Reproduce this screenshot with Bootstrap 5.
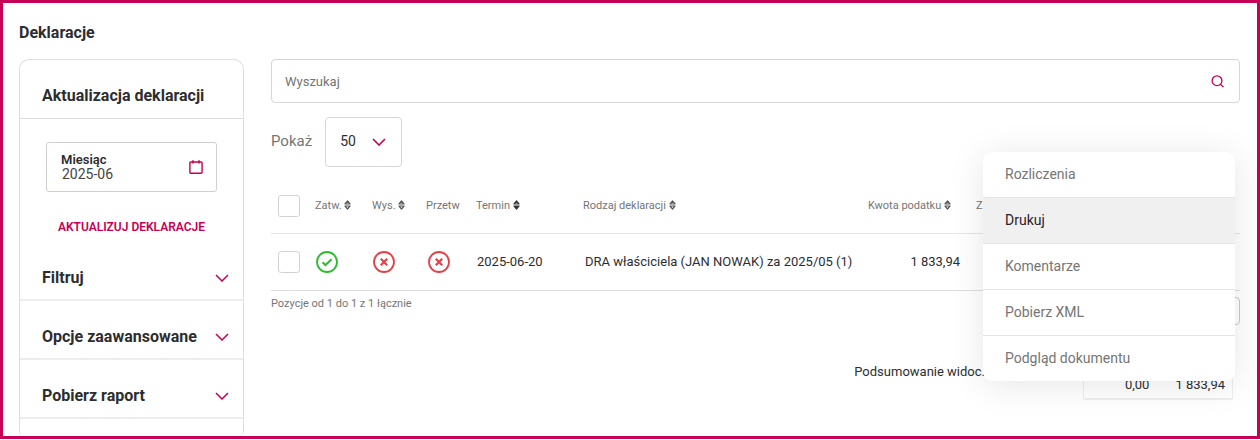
<!DOCTYPE html>
<html lang="pl">
<head>
<meta charset="utf-8">
<meta name="viewport" content="width=device-width, initial-scale=1">
<title>Deklaracje</title>
<link href="https://cdn.jsdelivr.net/npm/bootstrap@5.3.0/dist/css/bootstrap.min.css" rel="stylesheet">
<style>
  :root { --brand: #c60055; --ink: #2d2d2f; --muted: #757575; --line: #d6d6d6; --rule: #e6e6e6; }
  body { font-family: Roboto, "Liberation Sans", sans-serif; font-size: 14px; line-height: 20px; color: var(--ink); background: #fff; }
  .frame { border: 3px solid var(--brand); min-height: calc(100vh - 1px); padding: 20px 17px 0 16px; }
  .page-title { font-size: 16px; line-height: 20px; font-weight: 700; margin: 0 0 16px; }
  .layout { gap: 27px; }
  .side { width: 225px; border: 1px solid #dedede; border-bottom: 0; border-radius: 10px 10px 5px 5px; }
  .side-head, .side-toggle { font-size: 16px; line-height: 20px; font-weight: 700; color: var(--ink); }
  .side-head { margin: 0; padding: 26px 22px 12px; border-bottom: 1px solid #dedede; }
  .side-toggle { height: 59px; padding: 14px 14px 0 22px; background: none; border: 0; border-bottom: 2px solid #ededed; }
  .month { margin: 23px 26px 0; height: 50px; padding: 0 13px 0 14px; border: 1px solid #cfcfcf; border-radius: 3px; }
  .month-label { font-size: 13px; line-height: 14px; font-weight: 600; }
  .month-input { border: 0; padding: 0 0 0 1px; width: 90px; font-size: 14px; line-height: 15px; height: 15px; color: #444; outline: 0; }
  .update { margin: 25px 0 5px; font-size: 12px; line-height: 20px; font-weight: 600; color: var(--brand); background: none; border: 0; padding: 0; }
  .main { min-width: 0; }
  .search { height: 44px; border: 1px solid var(--line); border-radius: 4px; padding: 0 15px 0 13px; }
  .search-input { border: 0; outline: 0; padding: 2px 0 0; font-size: 13px; color: var(--ink); }
  .search-input::placeholder { color: var(--muted); }
  .icon-button { border: 0; background: none; padding: 0; display: flex; }
  .show-row { margin-top: 14px; gap: 13px; font-size: 15px; color: var(--muted); }
  .show-row label { padding-bottom: 2px; }
  .page-size { width: 77px; height: 50px; font-size: 14px; color: var(--ink); padding: 0 0 1px 14px; border: 1px solid var(--line); border-radius: 4px;
    background-image: url("data:image/svg+xml,%3Csvg xmlns='http://www.w3.org/2000/svg' viewBox='0 0 14 8'%3E%3Cpath d='M1 1l6 6 6-6' fill='none' stroke='%23c60055' stroke-width='1.6'/%3E%3C/svg%3E");
    background-size: 14px 8px; background-position: right 15px center; }
  .decl { table-layout: fixed; width: 100%; margin-top: 11px; }
  .decl th { height: 55px; padding: 1px 0 0; font-size: 11px; font-weight: 400; color: var(--muted); white-space: nowrap; border-bottom: 1px solid var(--rule); overflow: hidden; }
  .decl td { height: 57px; padding: 0 0 0 2px; font-size: 13px; white-space: nowrap; border-bottom: 1px solid #dedede; }
  .decl th:first-child, .decl td:first-child { padding-left: 7px; }
  .decl td.amount { padding-right: 16px; }
  .decl th.amount { padding-right: 25px; }
  .decl .state { padding-left: 1px; }
  .decl svg { vertical-align: middle; }
  .sort { margin-top: -1px; }
  .tick { width: 22px; height: 22px; margin: 0; border-color: #d2d2d2; border-radius: 4px; vertical-align: middle; }
  .c-tick { width: 44px; } .c-zatw { width: 57px; } .c-wys { width: 54px; } .c-przetw { width: 50px; } .c-termin { width: 107px; } .c-kwota { width: 128px; } .c-more { width: 264px; }
  .count { font-size: 11px; line-height: 20px; color: var(--muted); margin-top: 3px; }
  .pager { width: 40px; height: 28px; margin-top: 6px; border: 1px solid #c9c9c9; border-radius: 4px; background: #fff; }
  .totals { margin-top: 35px; font-size: 13px; }
  .totals-label { margin-right: 98px; line-height: 24px; }
  .totals-box { width: 150px; height: 40px; margin-right: 7px; padding: 14px 7px 0 0; gap: 26px; line-height: 20px; border: 1px solid #eee; border-bottom-width: 2px; border-radius: 2px; }
  .row-menu { top: 93px; right: 5px; width: 252px; border-radius: 9px; background: #fff; box-shadow: 0 4px 36px rgba(0,0,0,.1); overflow: hidden; z-index: 5; }
  .row-menu a { display: block; height: 46px; padding: 0 22px; line-height: 44px; font-size: 14px; color: #757575; text-decoration: none; border-bottom: 1px solid #e4e4e4; }
  .row-menu a.current { background: #f0f0f0; color: #2b2127; }
  .row-menu li:last-child a { height: 45px; border-bottom: 0; }
</style>
</head>
<body>
<svg class="d-none" aria-hidden="true">
  <symbol id="chevron" viewBox="0 0 14 8"><path d="M1 1l6 6 6-6" fill="none" stroke="#c60055" stroke-width="1.5"/></symbol>
  <symbol id="sort" viewBox="0 0 7 10"><path d="M1 4 3.5 1 6 4zM1 6 3.5 9 6 6z" fill="none" stroke="#555" stroke-width="1.2" stroke-linejoin="round"/></symbol>
  <symbol id="sort-down" viewBox="0 0 7 10"><path d="M1 4 3.5 1 6 4z" fill="none" stroke="#333" stroke-width="1.2" stroke-linejoin="round"/><path d="M1 6 3.5 9 6 6z" fill="#333" stroke="#333" stroke-width="1.2" stroke-linejoin="round"/></symbol>
  <symbol id="yes" viewBox="0 0 22 22"><circle cx="11" cy="11" r="10" fill="none" stroke="#2dbb2f" stroke-width="1.8"/><path d="M6.5 11.2l3 2.8 6-5.8" fill="none" stroke="#2dbb2f" stroke-width="2"/></symbol>
  <symbol id="no" viewBox="0 0 22 22"><circle cx="11" cy="11" r="10" fill="none" stroke="#e5404a" stroke-width="1.8"/><path d="M7.8 7.8l6.4 6.4M14.2 7.8l-6.4 6.4" stroke="#e5404a" stroke-width="2.2"/></symbol>
</svg>
<div class="frame d-flex flex-column">
  <h1 class="page-title">Deklaracje</h1>
  <div class="layout d-flex flex-grow-1">
    <aside class="side flex-shrink-0 d-flex flex-column">
      <h2 class="side-head">Aktualizacja deklaracji</h2>
      <div class="month d-flex align-items-center justify-content-between">
        <div class="d-flex flex-column">
          <label class="month-label" for="month">Miesiąc</label>
          <input class="month-input" id="month" type="text" value="2025-06">
        </div>
        <button class="icon-button" type="button" aria-label="Kalendarz">
          <svg width="14" height="14" viewBox="0 0 14 14" fill="none" stroke="#c60055" stroke-width="1.4"><rect x=".9" y="2" width="12.2" height="11.2" rx="1"/><path d="M4 .2v3.2M10 .2v3.2" stroke-width="1.5"/></svg>
        </button>
      </div>
      <button class="update align-self-center" type="button">AKTUALIZUJ DEKLARACJE</button>
      <button class="side-toggle d-flex align-items-center justify-content-between" type="button">Filtruj<svg width="14" height="8"><use href="#chevron"/></svg></button>
      <button class="side-toggle d-flex align-items-center justify-content-between" type="button">Opcje zaawansowane<svg width="14" height="8"><use href="#chevron"/></svg></button>
      <button class="side-toggle d-flex align-items-center justify-content-between" type="button">Pobierz raport<svg width="14" height="8"><use href="#chevron"/></svg></button>
    </aside>
    <main class="main flex-grow-1 position-relative">
      <div class="search d-flex align-items-center">
        <input class="search-input flex-grow-1" type="text" placeholder="Wyszukaj" aria-label="Wyszukaj">
        <button class="icon-button" type="button" aria-label="Szukaj">
          <svg width="13" height="13" viewBox="0 0 13 13" fill="none" stroke="#c60055" stroke-width="1.3"><circle cx="6" cy="5.7" r="4.9"/><path d="M9.3 9.2l3.2 2.8"/></svg>
        </button>
      </div>
      <div class="show-row d-flex align-items-center">
        <label for="size">Pokaż</label>
        <select class="form-select page-size" id="size"><option>50</option></select>
      </div>
      <table class="decl">
        <colgroup><col class="c-tick"><col class="c-zatw"><col class="c-wys"><col class="c-przetw"><col class="c-termin"><col><col class="c-kwota"><col class="c-more"></colgroup>
        <thead>
          <tr>
            <th><input class="form-check-input tick" type="checkbox" aria-label="Zaznacz wszystkie"></th>
            <th>Zatw. <svg class="sort" width="7" height="10"><use href="#sort"/></svg></th>
            <th>Wys. <svg class="sort" width="7" height="10"><use href="#sort"/></svg></th>
            <th>Przetw</th>
            <th>Termin <svg class="sort" width="7" height="10"><use href="#sort-down"/></svg></th>
            <th>Rodzaj deklaracji <svg class="sort" width="7" height="10"><use href="#sort"/></svg></th>
            <th class="amount text-end">Kwota podatku <svg class="sort" width="7" height="10"><use href="#sort"/></svg></th>
            <th>Z</th>
          </tr>
        </thead>
        <tbody>
          <tr>
            <td><input class="form-check-input tick" type="checkbox" aria-label="Zaznacz"></td>
            <td class="state"><svg width="22" height="22"><use href="#yes"/></svg></td>
            <td class="state"><svg width="22" height="22"><use href="#no"/></svg></td>
            <td><svg width="22" height="22"><use href="#no"/></svg></td>
            <td class="state">2025-06-20</td>
            <td>DRA właściciela (JAN NOWAK) za 2025/05 (1)</td>
            <td class="amount text-end">1 833,94</td>
            <td></td>
          </tr>
        </tbody>
      </table>
      <div class="d-flex justify-content-between align-items-start">
        <div class="count">Pozycje od 1 do 1 z 1 łącznie</div>
        <button class="pager" type="button" aria-label="Strona"></button>
      </div>
      <div class="totals d-flex justify-content-end">
        <div class="totals-label">Podsumowanie widoc.</div>
        <div class="totals-box d-flex justify-content-end"><span>0,00</span><span>1 833,94</span></div>
      </div>
      <ul class="row-menu position-absolute list-unstyled m-0">
        <li><a href="#">Rozliczenia</a></li>
        <li><a class="current" href="#">Drukuj</a></li>
        <li><a href="#">Komentarze</a></li>
        <li><a href="#">Pobierz XML</a></li>
        <li><a href="#">Podgląd dokumentu</a></li>
      </ul>
    </main>
  </div>
</div>
<script src="https://cdn.jsdelivr.net/npm/bootstrap@5.3.0/dist/js/bootstrap.bundle.min.js"></script>
</body>
</html>
